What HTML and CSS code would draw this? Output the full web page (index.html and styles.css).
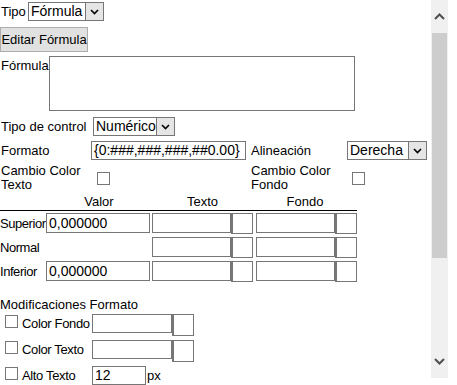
FILE: index.html
```html
<!DOCTYPE html>
<html>
<head>
<meta charset="utf-8">
<link rel="stylesheet" href="styles.css">
</head>
<body>
<div class="panel">
  <div class="content">
    <div class="row r-tipo">
      <span class="lbl">Tipo</span>
      <div class="select sel-tipo"><span class="val">Fórmula</span><span class="arrow"><svg width="9" height="6" viewBox="0 0 9 6"><path d="M1 1 L4.5 4.5 L8 1" fill="none" stroke="#000" stroke-width="1.6"/></svg></span></div>
    </div>
    <div class="row r-btn"><button class="btn">Editar Fórmula</button></div>
    <div class="row r-formula">
      <span class="lbl">Fórmula</span>
      <div class="textarea"></div>
    </div>

    <div class="grid">
      <span class="lbl g-l1">Tipo de control</span>
      <div class="select sel-ctrl"><span class="val">Numérico</span><span class="arrow"><svg width="9" height="6" viewBox="0 0 9 6"><path d="M1 1 L4.5 4.5 L8 1" fill="none" stroke="#000" stroke-width="1.6"/></svg></span></div>
      <span></span><span></span>

      <span class="lbl">Formato</span>
      <div class="input in-fmt">{0:###,###,###,##0.00}</div>
      <span class="lbl lbl-alin">Alineación</span>
      <div class="select sel-alin"><span class="val">Derecha</span><span class="arrow"><svg width="9" height="6" viewBox="0 0 9 6"><path d="M1 1 L4.5 4.5 L8 1" fill="none" stroke="#000" stroke-width="1.6"/></svg></span></div>

      <span class="lbl lbl2">Cambio Color<br>Texto</span>
      <div class="cellck"><span class="check ck-t"></span></div>
      <span class="lbl lbl2 lbl-alin">Cambio Color<br>Fondo</span>
      <div class="cellck"><span class="check ck-f"></span></div>
    </div>

    <div class="thead">
      <span class="h-val">Valor</span>
      <span class="h-tx">Texto</span>
      <span class="h-fo">Fondo</span>
    </div>
    <div class="tbody">
      <span class="tl">Superior</span><div class="input in-val">0,000000</div><div class="input in-c"></div><div class="swatch"></div><div class="input in-c in-f"></div><div class="swatch"></div>
      <span class="tl">Normal</span><span></span><div class="input in-c"></div><div class="swatch"></div><div class="input in-c in-f"></div><div class="swatch"></div>
      <span class="tl">Inferior</span><div class="input in-val">0,000000</div><div class="input in-c"></div><div class="swatch"></div><div class="input in-c in-f"></div><div class="swatch"></div>
    </div>

    <div class="mods-title">Modificaciones Formato</div>
    <div class="mods">
      <div class="mrow"><span class="check"></span><span class="mlbl">Color Fondo</span><div class="input in-m"></div><div class="swatch sw-m"></div></div>
      <div class="mrow"><span class="check"></span><span class="mlbl">Color Texto</span><div class="input in-m"></div><div class="swatch sw-m"></div></div>
      <div class="mrow"><span class="check"></span><span class="mlbl">Alto Texto</span><div class="input in-px">12</div><span class="px">px</span></div>
    </div>
  </div>
  <div class="scrollbar">
    <div class="sb-btn"><svg width="11" height="7" viewBox="0 0 11 7"><path d="M1 6 L5.5 1.5 L10 6" fill="none" stroke="#505050" stroke-width="2"/></svg></div>
    <div class="sb-track"><div class="sb-thumb"></div></div>
    <div class="sb-btn"><svg width="11" height="7" viewBox="0 0 11 7"><path d="M1 1 L5.5 5.5 L10 1" fill="none" stroke="#505050" stroke-width="2"/></svg></div>
  </div>
</div>
</body>
</html>
```
FILE: styles.css
```css
html, body {
  margin: 0;
  padding: 0;
  background: #fff;
}
body {
  font-family: "Liberation Sans", Arial, sans-serif;
  font-size: 13px;
  color: #000;
}
.panel {
  position: relative;
  width: 448px;
  height: 385px;
  overflow: hidden;
}
.content {
  padding-top: 2px;
}
.row {
  display: flex;
  align-items: center;
}
.lbl {
  padding-left: 1px;
  line-height: 15px;
  white-space: nowrap;
}
.r-tipo .lbl {
  width: 27px;
}
.select {
  display: flex;
  align-items: stretch;
  height: 19px;
  box-sizing: border-box;
  border: 1px solid #767676;
  background: #fff;
}
.select .val {
  flex: 1;
  padding-left: 2px;
  line-height: 17px;
  font-size: 14px;
}
.select .arrow {
  width: 18px;
  box-sizing: border-box;
  border-left: 1px solid #767676;
  background: #e5e5e5;
  display: flex;
  align-items: center;
  justify-content: center;
}
.sel-tipo { width: 76px; }
.r-btn { margin-top: 6px; }
.btn {
  font-family: inherit;
  font-size: 13px;
  height: 25px;
  width: 88px;
  padding: 0;
  margin: 0;
  border: 1px solid #adadad;
  background: #e1e1e1;
  color: #000;
}
.r-formula {
  align-items: flex-start;
  margin-top: 4px;
}
.r-formula .lbl {
  width: 48px;
  margin-top: 2px;
}
.textarea {
  width: 306px;
  height: 55px;
  box-sizing: border-box;
  border: 1px solid #767676;
}
.grid {
  display: grid;
  grid-template-columns: 91px 157px 99px 80px;
  grid-template-rows: 19px 19px 24px;
  row-gap: 5px;
  align-items: center;
  margin-top: 6px;
}
.sel-ctrl { width: 82px; margin-left: 2px; }
.sel-alin { width: 80px; }
.input {
  height: 20px;
  box-sizing: border-box;
  border: 1px solid #767676;
  background: #fff;
  font-size: 14px;
  line-height: 18px;
  padding-left: 2px;
  white-space: nowrap;
  overflow: hidden;
}
.in-fmt {
  width: 155px;
  height: 19px;
  line-height: 17px;
}
.lbl-alin { padding-left: 3px; }
.lbl2 { line-height: 14px; align-self: start; margin-top: -1px; }
.cellck { display: flex; align-items: center; padding-top: 3px; }
.check {
  display: inline-block;
  flex-shrink: 0;
  width: 13px;
  height: 13px;
  box-sizing: border-box;
  border: 1px solid #767676;
  background: #fff;
}
.ck-t { margin-left: 6px; }
.ck-f { margin-left: 5px; }
.thead, .tbody {
  display: grid;
  grid-template-columns: 46px 106px 79px 22px 82px 22px;
  width: 357px;
}
.thead {
  margin-top: 5px;
  border-bottom: 1px solid #000;
  line-height: 15px;
  padding-bottom: 1px;
}
.thead span { text-align: center; }
.h-val { grid-column: 2; }
.h-tx { grid-column: 3 / span 2; }
.h-fo { grid-column: 5 / span 2; }
.tbody {
  grid-auto-rows: 20px;
  row-gap: 4px;
  padding-top: 2px;
  align-items: center;
}
.tl { white-space: nowrap; line-height: 15px; letter-spacing: -0.45px; }
.in-val { width: 104px; }
.in-c { width: 79px; }
.in-f { margin-left: 3px; }
.swatch {
  width: 22px;
  height: 21px;
  box-sizing: border-box;
  border: 1px solid #767676;
  border-left: 2px solid #767676;
  background: #fff;
}
.mods-title {
  margin-top: 16px;
  line-height: 15px;
}
.mods {
  padding-left: 5px;
  margin-top: 2px;
}
.mrow {
  display: flex;
  align-items: flex-start;
  height: 26px;
}
.mrow .check { margin-top: 1px; margin-right: 4px; }
.mlbl {
  width: 70px;
  flex-shrink: 0;
  font-size: 13px;
  line-height: 16px;
  margin-top: 2px;
  white-space: nowrap;
  letter-spacing: -0.35px;
}
.in-m { width: 80px; height: 19px; flex-shrink: 0; }
.sw-m { height: 22px; width: 22px; flex-shrink: 0; }
.in-px { width: 54px; height: 19px; line-height: 17px; flex-shrink: 0; }
.px { margin-left: 1px; line-height: 16px; margin-top: 2px; }
.scrollbar {
  position: absolute;
  top: 0;
  left: 431px;
  width: 17px;
  height: 378px;
  background: #f0f0f0;
  display: flex;
  flex-direction: column;
}
.sb-btn {
  height: 33px;
  display: flex;
  align-items: center;
  justify-content: center;
}
.sb-track {
  flex: 1;
}
.sb-thumb {
  height: 225px;
  margin: 0 1px;
  background: #cdcdcd;
}
```
